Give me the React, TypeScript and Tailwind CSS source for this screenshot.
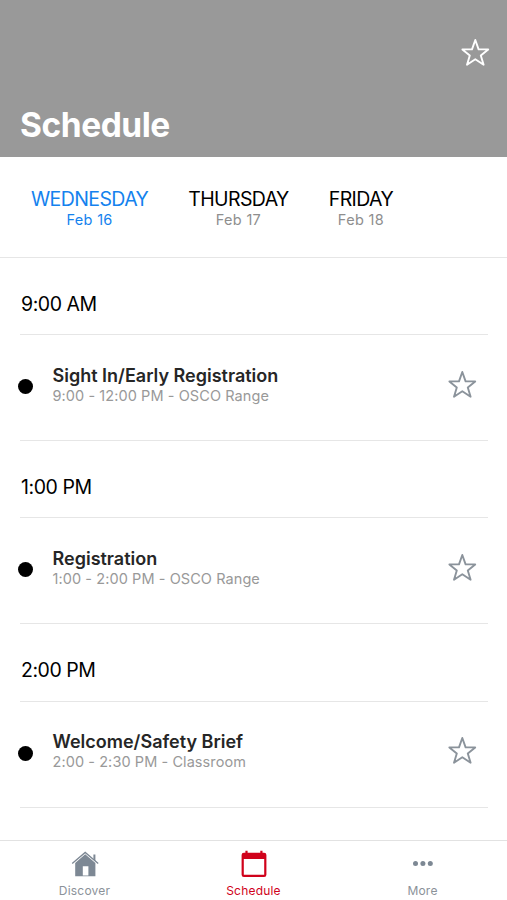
import { useState } from "react";

interface Session {
  time: string;
  title: string;
  detail: string;
}

const days = [
  { name: "WEDNESDAY", date: "Feb 16" },
  { name: "THURSDAY", date: "Feb 17" },
  { name: "FRIDAY", date: "Feb 18" },
];

const sessions: Session[] = [
  {
    time: "9:00 AM",
    title: "Sight In/Early Registration",
    detail: "9:00 - 12:00 PM - OSCO Range",
  },
  {
    time: "1:00 PM",
    title: "Registration",
    detail: "1:00 - 2:00 PM - OSCO Range",
  },
  {
    time: "2:00 PM",
    title: "Welcome/Safety Brief",
    detail: "2:00 - 2:30 PM - Classroom",
  },
];

function StarIcon({ className }: { className?: string }) {
  return (
    <svg
      viewBox="0 0 30 30"
      className={`h-[30px] w-[30px] ${className ?? ""}`}
      fill="none"
      stroke="currentColor"
      strokeWidth="1.9"
      strokeLinejoin="round"
    >
      <path d="M15.3 2 18.6 11.4H28.2L20.8 17.4 23.6 26.7 15.3 21.3 7 26.7 9.8 17.4 2.4 11.4H12Z" />
    </svg>
  );
}

function HomeIcon() {
  return (
    <svg viewBox="0 0 28 28" className="h-7 w-7" fill="currentColor">
      <path d="M22.4 4.4h2v7L22.4 9.6Z" />
      <path
        d="M1.2 13.6 14.2 2.4 27.2 13.6"
        fill="none"
        stroke="currentColor"
        strokeWidth="1.3"
      />
      <path
        fillRule="evenodd"
        d="M14.2 4.2 24.4 13V26.2H4.2V13ZM11.8 16.3V25.4H17.4V16.3Z"
      />
    </svg>
  );
}

function CalendarIcon() {
  return (
    <svg viewBox="0 0 28 28" className="h-7 w-7" fill="currentColor">
      <path
        fillRule="evenodd"
        d="M5.4.7h2.2v2.1h12.7V.7h2.2v2.1h1.6a2.3 2.3 0 0 1 2.3 2.3v19.7a2.3 2.3 0 0 1-2.3 2.3H3.9a2.3 2.3 0 0 1-2.3-2.3V5.1a2.3 2.3 0 0 1 2.3-2.3h1.5ZM3.8 9v15.7h20.4V9Z"
      />
    </svg>
  );
}

function MoreIcon() {
  return (
    <svg viewBox="0 0 28 28" className="h-7 w-7" fill="currentColor">
      <circle cx="6.5" cy="13.5" r="2.5" />
      <circle cx="13.9" cy="13.5" r="2.5" />
      <circle cx="21.3" cy="13.5" r="2.5" />
    </svg>
  );
}

const navItems = [
  { label: "Discover", icon: <HomeIcon /> },
  { label: "Schedule", icon: <CalendarIcon /> },
  { label: "More", icon: <MoreIcon /> },
];

export default function App() {
  const [day, setDay] = useState(0);
  const [tab, setTab] = useState("Schedule");

  return (
    <div className="flex h-[900px] w-full flex-col overflow-hidden bg-white font-['Inter','Liberation_Sans',sans-serif] text-black">
      <header className="flex h-[157px] shrink-0 flex-col justify-between bg-[#999999] pt-[38px] pr-[17px] pb-3 pl-5 text-white">
        <button type="button" aria-label="Favorites" className="self-end">
          <StarIcon />
        </button>
        <h1 className="text-[33.5px] leading-10 font-bold tracking-[-0.45px]">
          Schedule
        </h1>
      </header>

      {/* Day picker */}
      <div className="flex h-[101px] shrink-0 items-start gap-10 border-b border-[#e6e6e6] pt-[30px] pl-[31px]">
        {days.map((d, i) => (
          <button
            key={d.name}
            type="button"
            onClick={() => setDay(i)}
            className={`flex flex-col items-center ${i === day ? "text-[#1482ee]" : "text-black"}`}
          >
            <span className="text-[19.5px] leading-6 tracking-[-0.6px]">
              {d.name}
            </span>
            <span
              className={`text-[14.5px] leading-[18px] tracking-[0.3px] ${i === day ? "" : "text-[#8e8e8e]"}`}
            >
              {d.date}
            </span>
          </button>
        ))}
      </div>

      <main className="min-h-0 flex-1 overflow-hidden pr-[19px] pl-5">
        {sessions.map((s) => (
          <section key={s.time} className="h-[183.2px]">
            <h2 className="h-[77.3px] border-b border-[#e6e6e6] pt-[33.6px] pl-px text-[19.5px] leading-6 tracking-[-0.45px]">
              {s.time}
            </h2>
            <div className="flex h-[105.9px] items-start border-b border-[#e6e6e6]">
              <span className="mt-[44px] -ml-[2px] h-[15px] w-[15px] shrink-0 rounded-full bg-black" />
              <div className="ml-[19.5px] flex-1 pt-[29.5px]">
                <h3 className="text-[18px] leading-[22px] font-semibold text-[#262626]">
                  {s.title}
                </h3>
                <p className="text-[14.5px] leading-[18px] tracking-[0.08px] text-[#999999]">
                  {s.detail}
                </p>
              </div>
              <button
                type="button"
                aria-label="Favorite"
                className="mt-[34.7px] mr-[11px] text-[#8b939b]"
              >
                <StarIcon />
              </button>
            </div>
          </section>
        ))}
      </main>

      <nav className="flex h-[60px] shrink-0 border-t border-[#e2e2e2]">
        {navItems.map((n) => (
          <button
            key={n.label}
            type="button"
            onClick={() => setTab(n.label)}
            className={`flex flex-1 flex-col items-center pt-[9px] ${n.label === tab ? "text-[#d0021b]" : "text-[#7d8894]"}`}
          >
            {n.icon}
            <span
              className={`mt-[5px] text-[12px] leading-4 tracking-[0.2px] ${n.label === tab ? "" : "text-[#8b9299]"}`}
            >
              {n.label}
            </span>
          </button>
        ))}
      </nav>
    </div>
  );
}
